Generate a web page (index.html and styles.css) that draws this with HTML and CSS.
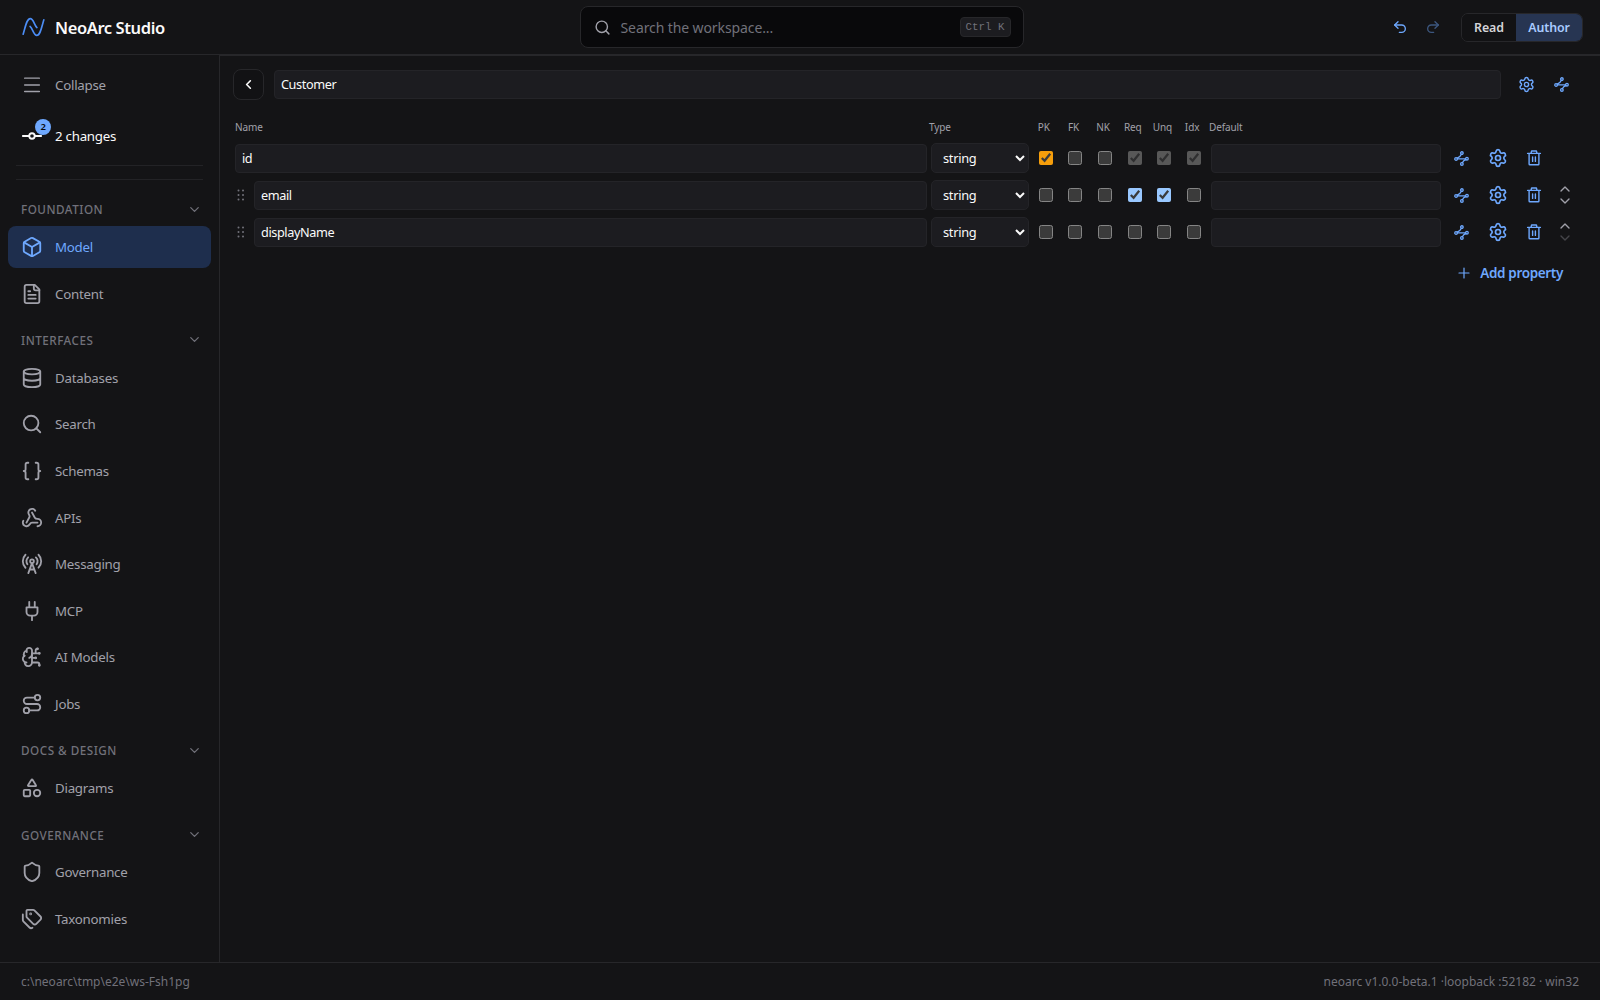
FILE: index.html
```html
<!DOCTYPE html>
<html lang="en">
<head>
  <meta charset="UTF-8">
  <title>NeoArc Studio</title>
  <link rel="stylesheet" href="styles.css">
</head>
<body>

  <!-- icon set -->
  <svg class="sprite">
    <symbol id="i-menu" viewBox="0 0 24 24"><path d="M4 4.5h16M4 12h16M4 19h16"/></symbol>
    <symbol id="i-commit" viewBox="0 0 24 24"><circle cx="12" cy="12" r="3"/><path d="M2 12h7M15 12h7"/></symbol>
    <symbol id="i-chevron" viewBox="0 0 24 24"><path d="m6 9 6 6 6-6"/></symbol>
    <symbol id="i-box" viewBox="0 0 24 24"><path d="M21 8a2 2 0 0 0-1-1.73l-7-4a2 2 0 0 0-2 0l-7 4A2 2 0 0 0 3 8v8a2 2 0 0 0 1 1.73l7 4a2 2 0 0 0 2 0l7-4A2 2 0 0 0 21 16Z"/><path d="m3.3 7 8.7 5 8.7-5M12 22V12"/></symbol>
    <symbol id="i-file" viewBox="0 0 24 24"><path d="M15 2H6a2 2 0 0 0-2 2v16a2 2 0 0 0 2 2h12a2 2 0 0 0 2-2V7Z"/><path d="M14 2v4a2 2 0 0 0 2 2h4M10 9H8M16 13H8M16 17H8"/></symbol>
    <symbol id="i-database" viewBox="0 0 24 24"><ellipse cx="12" cy="5" rx="9" ry="3"/><path d="M3 5v14a9 3 0 0 0 18 0V5M3 12a9 3 0 0 0 18 0"/></symbol>
    <symbol id="i-search" viewBox="0 0 24 24"><circle cx="11" cy="11" r="8"/><path d="m21 21-4.3-4.3"/></symbol>
    <symbol id="i-braces" viewBox="0 0 24 24"><path d="M8 3H7a2 2 0 0 0-2 2v5a2 2 0 0 1-2 2 2 2 0 0 1 2 2v5a2 2 0 0 0 2 2h1M16 21h1a2 2 0 0 0 2-2v-5a2 2 0 0 1 2-2 2 2 0 0 1-2-2V5a2 2 0 0 0-2-2h-1"/></symbol>
    <symbol id="i-webhook" viewBox="0 0 24 24"><path d="M18 16.98h-5.99c-1.1 0-1.95.94-2.48 1.9A4 4 0 0 1 2 17c.01-.7.2-1.4.57-2"/><path d="m6 17 3.13-5.78c.53-.97.1-2.18-.5-3.1a4 4 0 1 1 6.89-4.06"/><path d="m12 6 3.13 5.73C15.66 12.7 16.9 13 18 13a4 4 0 0 1 0 8"/></symbol>
    <symbol id="i-tower" viewBox="0 0 24 24"><path d="M4.9 16.1C1 12.2 1 5.8 4.9 1.9M7.8 4.7a6.14 6.14 0 0 0-.8 7.5"/><circle cx="12" cy="9" r="2"/><path d="M16.2 4.8c2 2 2.26 5.11.8 7.47M19.1 1.9a9.96 9.96 0 0 1 0 14.1M9.5 18h5M8 22l4-11 4 11"/></symbol>
    <symbol id="i-plug" viewBox="0 0 24 24"><path d="M12 22v-5M9 8V2M15 8V2M18 8v5a4 4 0 0 1-4 4h-4a4 4 0 0 1-4-4V8Z"/></symbol>
    <symbol id="i-brain" viewBox="0 0 24 24"><path d="M12 5a3 3 0 1 0-5.997.125 4 4 0 0 0-2.526 5.77 4 4 0 0 0 .556 6.588A4 4 0 1 0 12 18Z"/><path d="M9 13a4.5 4.5 0 0 0 3-4M6.003 5.125A3 3 0 0 0 6.401 6.5M3.477 10.896a4 4 0 0 1 .585-.396M6 18a4 4 0 0 1-1.967-.516M12 13h4M12 18h6a2 2 0 0 1 2 2v1M12 8h8M16 8V5a2 2 0 0 1 2-2"/><circle cx="16" cy="13" r=".5"/><circle cx="18" cy="3" r=".5"/><circle cx="20" cy="21" r=".5"/><circle cx="20" cy="8" r=".5"/></symbol>
    <symbol id="i-route" viewBox="0 0 24 24"><circle cx="6" cy="19" r="3"/><path d="M9 19h8.5a3.5 3.5 0 0 0 0-7h-11a3.5 3.5 0 0 1 0-7H15"/><circle cx="18" cy="5" r="3"/></symbol>
    <symbol id="i-shapes" viewBox="0 0 24 24"><path d="M8.3 10a.7.7 0 0 1-.626-1.079L11.4 3a.7.7 0 0 1 1.198-.043L16.3 8.9a.7.7 0 0 1-.572 1.1Z"/><rect x="3" y="14" width="7" height="7" rx="1"/><circle cx="17.5" cy="17.5" r="3.5"/></symbol>
    <symbol id="i-shield" viewBox="0 0 24 24"><path d="M20 13c0 5-3.5 7.5-7.66 8.95a1 1 0 0 1-.67-.01C7.5 20.5 4 18 4 13V6a1 1 0 0 1 1-1c2 0 4.5-1.2 6.24-2.72a1.17 1.17 0 0 1 1.52 0C14.51 3.81 17 5 19 5a1 1 0 0 1 1 1z"/></symbol>
    <symbol id="i-tags" viewBox="0 0 24 24"><path d="M13.172 2a2 2 0 0 1 1.414.586l6.71 6.71a2.4 2.4 0 0 1 0 3.408l-4.592 4.592a2.4 2.4 0 0 1-3.408 0l-6.71-6.71A2 2 0 0 1 6 9.172V3a1 1 0 0 1 1-1z"/><path d="M2 7v6.172a2 2 0 0 0 .586 1.414l6.71 6.71a2.4 2.4 0 0 0 3.191.193"/><circle cx="10.5" cy="6.5" r=".5"/></symbol>
    <symbol id="i-undo" viewBox="0 0 24 24"><path d="M9 14 4 9l5-5"/><path d="M4 9h10.5a5.5 5.5 0 0 1 0 11H11"/></symbol>
    <symbol id="i-gear" viewBox="0 0 24 24"><path d="M9.671 4.136a2.34 2.34 0 0 1 4.659 0 2.34 2.34 0 0 0 3.319 1.915 2.34 2.34 0 0 1 2.33 4.033 2.34 2.34 0 0 0 0 3.831 2.34 2.34 0 0 1-2.33 4.033 2.34 2.34 0 0 0-3.319 1.915 2.34 2.34 0 0 1-4.659 0 2.34 2.34 0 0 0-3.32-1.915 2.34 2.34 0 0 1-2.33-4.033 2.34 2.34 0 0 0 0-3.831A2.34 2.34 0 0 1 6.35 6.051a2.34 2.34 0 0 0 3.319-1.915"/><circle cx="12" cy="12" r="3"/></symbol>
    <symbol id="i-link" viewBox="0 0 16 16"><circle cx="2.2" cy="8.5" r="1.4"/><circle cx="13.8" cy="8.2" r="1.4"/><circle cx="8.4" cy="2.2" r="1.4"/><circle cx="8.4" cy="13.8" r="1.4"/><path d="M3.6 8.4h8.8M3.4 7.5q3.400-1.200 4.500-4M12.800 9.300q-2.800.9-3.900 3.200"/></symbol>
    <symbol id="i-trash" viewBox="0 0 16 16"><path d="M1.6 3.4h12.8M5 3.2l.6-2.2h4.8l.6 2.2M3.1 3.6v10.4q0 .8.8.8h8.2q.8 0 .8-.8V3.6M6.6 7v4.4M9.400 7v4.400"/></symbol>
    <symbol id="i-plus" viewBox="0 0 12 12"><path d="M6 1v10M1 6h10"/></symbol>
    <symbol id="i-grip" viewBox="0 0 8 12"><path d="M1.5 1.5h.01M6 1.5h.01M1.5 6h.01M6 6h.01M1.5 10.5h.01M6 10.5h.01"/></symbol>
  </svg>

  <header class="topbar">
    <div class="brand">
      <svg class="logo" viewBox="0 0 24 20"><path d="M1.2 17.5C3.4 10.5 4.8 1.2 8.6 1.2c3.600 0 4 7 7 9.400"/><path d="M8.400 9.400c3 2.400 3.600 9.400 7 9.400 3.800 0 5.200-9.300 7.400-16.300"/></svg>
      <span>NeoArc Studio</span>
    </div>
    <div class="search">
      <svg class="icon"><use href="#i-search"/></svg>
      <span class="placeholder">Search the workspace...</span>
      <kbd>Ctrl K</kbd>
    </div>
    <div class="actions">
      <svg class="icon undo"><use href="#i-undo"/></svg>
      <svg class="icon redo"><use href="#i-undo"/></svg>
      <div class="mode">
        <button>Read</button>
        <button class="on">Author</button>
      </div>
    </div>
  </header>

  <div class="body">
    <nav class="sidebar">
      <a class="item dim"><svg class="icon"><use href="#i-menu"/></svg>Collapse</a>
      <a class="item changes"><svg class="icon"><use href="#i-commit"/></svg>2 changes<span class="badge">2</span></a>
      <div class="divider"></div>

      <h2>Foundation<svg class="icon"><use href="#i-chevron"/></svg></h2>
      <a class="item active"><svg class="icon"><use href="#i-box"/></svg>Model</a>
      <a class="item"><svg class="icon"><use href="#i-file"/></svg>Content</a>

      <h2>Interfaces<svg class="icon"><use href="#i-chevron"/></svg></h2>
      <a class="item"><svg class="icon"><use href="#i-database"/></svg>Databases</a>
      <a class="item"><svg class="icon"><use href="#i-search"/></svg>Search</a>
      <a class="item"><svg class="icon"><use href="#i-braces"/></svg>Schemas</a>
      <a class="item"><svg class="icon"><use href="#i-webhook"/></svg>APIs</a>
      <a class="item"><svg class="icon"><use href="#i-tower"/></svg>Messaging</a>
      <a class="item"><svg class="icon"><use href="#i-plug"/></svg>MCP</a>
      <a class="item"><svg class="icon"><use href="#i-brain"/></svg>AI Models</a>
      <a class="item"><svg class="icon"><use href="#i-route"/></svg>Jobs</a>

      <h2>Docs &amp; Design<svg class="icon"><use href="#i-chevron"/></svg></h2>
      <a class="item"><svg class="icon"><use href="#i-shapes"/></svg>Diagrams</a>

      <h2>Governance<svg class="icon"><use href="#i-chevron"/></svg></h2>
      <a class="item"><svg class="icon"><use href="#i-shield"/></svg>Governance</a>
      <a class="item"><svg class="icon"><use href="#i-tags"/></svg>Taxonomies</a>
    </nav>

    <main>
      <div class="title-row">
        <button class="back"><svg class="icon"><use href="#i-chevron"/></svg></button>
        <input class="field" type="text" value="Customer">
        <svg class="icon gear"><use href="#i-gear"/></svg>
        <svg class="icon link"><use href="#i-link"/></svg>
      </div>

      <div class="row head">
        <span>Name</span><span>Type</span>
        <span class="c">PK</span><span class="c">FK</span><span class="c">NK</span><span class="c">Req</span><span class="c">Unq</span><span class="c">Idx</span>
        <span>Default</span>
      </div>

      <div class="row">
        <div class="name"><input class="field" type="text" value="id"></div>
        <select><option>string</option></select>
        <input class="pk" type="checkbox" checked><input type="checkbox"><input type="checkbox">
        <input type="checkbox" checked disabled><input type="checkbox" checked disabled><input type="checkbox" checked disabled>
        <input class="field" type="text">
        <svg class="icon link"><use href="#i-link"/></svg>
        <svg class="icon gear"><use href="#i-gear"/></svg>
        <svg class="icon trash"><use href="#i-trash"/></svg>
      </div>

      <div class="row">
        <div class="name"><svg class="icon grip"><use href="#i-grip"/></svg><input class="field" type="text" value="email"></div>
        <select><option>string</option></select>
        <input type="checkbox"><input type="checkbox"><input type="checkbox">
        <input type="checkbox" checked><input type="checkbox" checked><input type="checkbox">
        <input class="field" type="text">
        <svg class="icon link"><use href="#i-link"/></svg>
        <svg class="icon gear"><use href="#i-gear"/></svg>
        <svg class="icon trash"><use href="#i-trash"/></svg>
        <div class="move"><svg class="icon up"><use href="#i-chevron"/></svg><svg class="icon"><use href="#i-chevron"/></svg></div>
      </div>

      <div class="row">
        <div class="name"><svg class="icon grip"><use href="#i-grip"/></svg><input class="field" type="text" value="displayName"></div>
        <select><option>string</option></select>
        <input type="checkbox"><input type="checkbox"><input type="checkbox">
        <input type="checkbox"><input type="checkbox"><input type="checkbox">
        <input class="field" type="text">
        <svg class="icon link"><use href="#i-link"/></svg>
        <svg class="icon gear"><use href="#i-gear"/></svg>
        <svg class="icon trash"><use href="#i-trash"/></svg>
        <div class="move"><svg class="icon up"><use href="#i-chevron"/></svg><svg class="icon off"><use href="#i-chevron"/></svg></div>
      </div>

      <div class="add"><svg class="icon"><use href="#i-plus"/></svg><span>Add property</span></div>
    </main>
  </div>

  <footer>
    <span class="path">c:\neoarc\tmp\e2e\ws-Fsh1pg</span>
    <span class="version">neoarc v1.0.0-beta.1 ·loopback :52182 · win32</span>
  </footer>

</body>
</html>
```

FILE: styles.css
```css
* {
  box-sizing: border-box;
}
body {
  margin: 0;
  height: 1000px;
  display: flex;
  flex-direction: column;
  background: #141416;
  color: #fafafa;
  color-scheme: dark;
  font-family: "Noto Sans", "Open Sans", sans-serif;
  font-size: 13.3px;
  overflow: hidden;
}
button, input, select {
  font-family: inherit;
}
.sprite {
  display: none;
}
.icon {
  fill: none;
  stroke: currentColor;
  stroke-width: 2;
  stroke-linecap: round;
  stroke-linejoin: round;
  flex: none;
}

/* top bar */
.topbar {
  height: 55px;
  border-bottom: 1px solid #27272a;
  display: grid;
  grid-template-columns: 1fr 444px 1fr;
  align-items: center;
  padding: 0 18px 0 21px;
}
.brand {
  display: flex;
  align-items: center;
  gap: 10px;
  margin-left: 1px;
  font-size: 16.5px;
  font-weight: 600;
  letter-spacing: -0.4px;
}
.logo {
  width: 23px;
  height: 20px;
  fill: none;
  stroke: #4c8df5;
  stroke-width: 1.7;
  stroke-linecap: round;
}
.search {
  height: 42px;
  display: flex;
  align-items: center;
  padding: 0 12px 0 13px;
  background: #09090b;
  border: 1px solid #27272a;
  border-radius: 8px;
  color: #a1a1aa;
}
.search .icon {
  width: 17px;
  height: 17px;
}
.placeholder {
  flex: 1;
  margin-left: 10px;
  color: #71717a;
  font-size: 14px;
  letter-spacing: -0.1px;
}
kbd {
  width: 51px;
  height: 20px;
  line-height: 18px;
  text-align: center;
  font-family: "Liberation Mono", monospace;
  font-size: 10.8px;
  color: #71717a;
  background: #1c1c20;
  border: 1px solid #27272a;
  border-radius: 4px;
}
.actions {
  display: flex;
  align-items: center;
  justify-content: flex-end;
  color: #6ea8fe;
}
.actions .icon {
  width: 16px;
  height: 16px;
  margin-right: 17px;
}
.actions .redo {
  transform: scaleX(-1);
  opacity: 0.45;
  margin-right: 20px;
}
.mode {
  display: flex;
  width: 122px;
  height: 29px;
  margin-right: -1px;
  border: 1px solid #27272a;
  border-radius: 7px;
  overflow: hidden;
}
.mode button {
  width: 54px;
  padding: 0;
  border: 0;
  background: #121214;
  color: #d4d4d8;
  font-size: 12.4px;
  font-weight: 600;
  letter-spacing: -0.1px;
}
.mode .on {
  flex: 1;
  background: #273552;
  color: #a9cbff;
}

/* sidebar */
.body {
  flex: 1;
  display: flex;
  min-height: 0;
}
.sidebar {
  width: 219px;
  padding: 9px 8px 0;
}
.item {
  position: relative;
  height: 42.6px;
  margin-bottom: 4px;
  padding-left: 13px;
  display: flex;
  align-items: center;
  gap: 12px;
  border-radius: 8px;
  color: #a1a1aa;
  letter-spacing: -0.25px;
}
.item .icon {
  width: 22px;
  height: 22px;
}
.item.dim {
  margin-bottom: 8px;
}
.item.dim .icon {
  stroke-width: 1.6;
}
.item.changes {
  color: #fafafa;
}
.item.active {
  background: #1e2e4d;
  color: #6ea8fe;
}
.badge {
  position: absolute;
  left: 27px;
  top: 4px;
  width: 16px;
  height: 16px;
  border-radius: 50%;
  background: #6ea8fe;
  color: #09090b;
  font-size: 9.5px;
  font-weight: 600;
  line-height: 16px;
  text-align: center;
}
.divider {
  height: 15px;
  margin: 8px 8px 19px;
  border-top: 1px solid #232326;
  border-bottom: 1px solid #232326;
}
h2 {
  height: 20px;
  margin: 15px 0 6.6px;
  padding: 0 9px 0 13px;
  display: flex;
  align-items: center;
  justify-content: space-between;
  font-size: 11.7px;
  font-weight: 500;
  letter-spacing: 0.5px;
  text-transform: uppercase;
  color: #71717a;
}
h2 .icon {
  width: 15px;
  height: 15px;
}

/* entity editor */
main {
  flex: 1;
  border-top: 1px solid #27272a;
  border-left: 1px solid #27272a;
  padding: 13px 15px 0;
}
.title-row {
  display: flex;
  align-items: center;
  margin-left: -2px;
  height: 31px;
  color: #6ea8fe;
}
.title-row .field {
  width: 1227px;
  margin: 0 17px 0 10px;
}
.title-row .gear {
  width: 17px;
  height: 17px;
  margin-right: 19px;
}
.back {
  width: 31px;
  height: 31px;
  padding: 0;
  display: grid;
  place-items: center;
  background: #121214;
  border: 1px solid #27272a;
  border-radius: 8px;
  color: #fafafa;
}
.back .icon {
  width: 15px;
  height: 15px;
  transform: rotate(90deg);
  stroke-width: 2.6;
}
.field {
  width: 100%;
  min-width: 0;
  height: 29px;
  padding: 0 6px 1px;
  background: #1c1c20;
  border: 1px solid #242428;
  border-radius: 4px;
  color: #fafafa;
  font-size: 12.7px;
  letter-spacing: -0.4px;
}
.row {
  display: grid;
  grid-template-columns: 692px 98px repeat(6, 25.67px) 230px 34px 30px 34px 20px;
  column-gap: 4px;
  align-items: center;
  justify-items: center;
  height: 37px;
  color: #6ea8fe;
}
.row.head {
  grid-template-columns: 690px 98px repeat(6, 25.67px) 230px;
  height: 20px;
  margin: 17px 0 3px;
  justify-items: start;
  font-size: 10px;
  letter-spacing: -0.1px;
  color: #a1a1aa;
}
.head .c {
  justify-self: center;
}
.name {
  width: 100%;
  display: flex;
  align-items: center;
}
.grip {
  width: 8px;
  height: 12px;
  margin: 0 9px 2px 2px;
  color: #71717a;
}
select {
  width: 98px;
  height: 30px;
  margin-bottom: 1px;
  padding: 0 0 0 7px;
  background: #1c1c20;
  border: 1px solid #242428;
  border-radius: 5px;
  color: #fafafa;
  font-size: 12.8px;
  letter-spacing: -0.3px;
}
input[type="checkbox"] {
  width: 14px;
  height: 14px;
  margin: 0 0 1px;
}
input[type="checkbox"]:disabled {
  opacity: 0.7;
}
.pk {
  accent-color: #f59e0b;
}
.link {
  width: 15px;
  height: 15px;
  stroke-width: 1.4;
}
.row .gear {
  width: 20px;
  height: 20px;
  margin-bottom: 2px;
}
.trash {
  width: 16px;
  height: 16px;
  margin-bottom: 1px;
  stroke-width: 1.4;
}
.move {
  display: flex;
  flex-direction: column;
  margin-bottom: 2px;
  color: #a1a1aa;
}
.move .icon {
  width: 16px;
  height: 16px;
  margin: -2px 0;
}
.up {
  transform: rotate(180deg);
}
.off {
  opacity: 0.35;
}
.add {
  display: flex;
  align-items: center;
  justify-content: flex-end;
  gap: 10px;
  margin: 13px 22px 0 0;
  font-size: 13.5px;
  font-weight: 600;
  letter-spacing: -0.35px;
  color: #6ea8fe;
}
.add .icon {
  width: 12px;
  height: 12px;
  stroke-width: 1.2;
}

footer {
  height: 38px;
  border-top: 1px solid #27272a;
  padding: 0 21px;
  display: flex;
  align-items: center;
  justify-content: space-between;
  font-size: 12px;
  color: #71717a;
}
```
